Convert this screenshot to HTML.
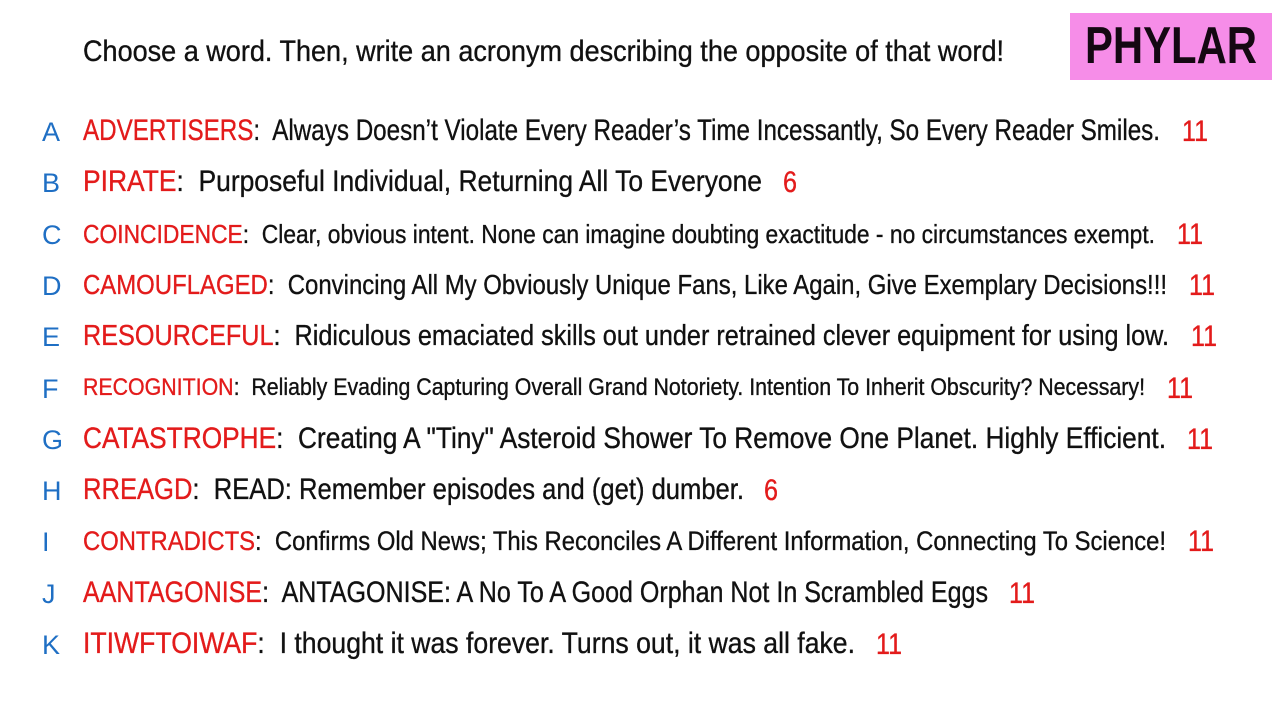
<!DOCTYPE html>
<html><head><meta charset="utf-8"><style>
body{margin:0;width:1280px;height:720px;background:#fff;position:relative;overflow:hidden;font-family:"Liberation Sans",sans-serif;color:#111}
.t{position:absolute;left:83px;white-space:nowrap;transform-origin:0 50%;line-height:1;-webkit-text-stroke:0.35px currentColor}
.r{color:#e31b1b}
.l{position:absolute;left:42px;color:#1f6fc4;font-size:27px;line-height:1}
.n{position:absolute;color:#e31b1b;font-size:30px;line-height:1;white-space:nowrap;-webkit-text-stroke:0.35px currentColor}
#logo{position:absolute;left:1070px;top:13px;width:202px;height:67px;background:#f68de8;color:#140812;font-size:52px;font-weight:bold;line-height:67px;overflow:hidden}
#logo span{position:absolute;left:15px;top:0;white-space:nowrap;transform-origin:0 50%}
</style></head><body>
<div id="logo"><span id="lg">PHYLAR</span></div>
<div class="t" id="h" style="top:37px;font-size:30px">Choose a word. Then, write an acronym describing the opposite of that word!</div>
<div id="rows"></div>
<script>
var R=[
["A","ADVERTISERS","Always Doesn’t Violate Every Reader’s Time Incessantly, So Every Reader Smiles.",1160,"11",1182,30],
["B","PIRATE","Purposeful Individual, Returning All To Everyone",762,"6",783,30],
["C","COINCIDENCE","Clear, obvious intent. None can imagine doubting exactitude - no circumstances exempt.",1155,"11",1177,26],
["D","CAMOUFLAGED","Convincing All My Obviously Unique Fans, Like Again, Give Exemplary Decisions!!!",1167,"11",1189,28],
["E","RESOURCEFUL","Ridiculous emaciated skills out under retrained clever equipment for using low.",1169,"11",1191,29],
["F","RECOGNITION","Reliably Evading Capturing Overall Grand Notoriety. Intention To Inherit Obscurity? Necessary!",1145,"11",1167,24],
["G","CATASTROPHE","Creating A \"Tiny\" Asteroid Shower To Remove One Planet. Highly Efficient.",1166,"11",1187,30],
["H","RREAGD","READ: Remember episodes and (get) dumber.",744,"6",764,30],
["I","CONTRADICTS","Confirms Old News; This Reconciles A Different Information, Connecting To Science!",1166,"11",1188,27],
["J","AANTAGONISE","ANTAGONISE: A No To A Good Orphan Not In Scrambled Eggs",988,"11",1009,30],
["K","ITIWFTOIWAF","I thought it was forever. Turns out, it was all fake.",855,"11",876,30]];
var c=document.getElementById('rows'),html='';
R.forEach(function(r,i){var y=132+i*51.3;
html+='<div class="l" style="top:'+(y-13)+'px">'+r[0]+'</div>';
html+='<div class="t" id="t'+i+'" style="top:'+(y-r[6]/2-1)+'px;font-size:'+r[6]+'px"><span class="r">'+r[1]+'</span>:&nbsp; '+r[2]+'</div>';
html+='<div class="n" id="n'+i+'" style="left:'+r[5]+'px;top:'+(y-15)+'px">'+r[4]+'</div>';});
c.innerHTML=html;
function fit(el,start,end){var w=el.getBoundingClientRect().width;el.style.transform='scaleX('+((end-start)/w)+')';}
R.forEach(function(r,i){fit(document.getElementById('t'+i),83,r[3]);var n=document.getElementById('n'+i);n.style.transformOrigin='0 50%';fit(n,0,r[4].length==2?26:14);});
fit(document.getElementById('h'),83,1004);
fit(document.getElementById('lg'),0,172);
</script>
</body></html>
